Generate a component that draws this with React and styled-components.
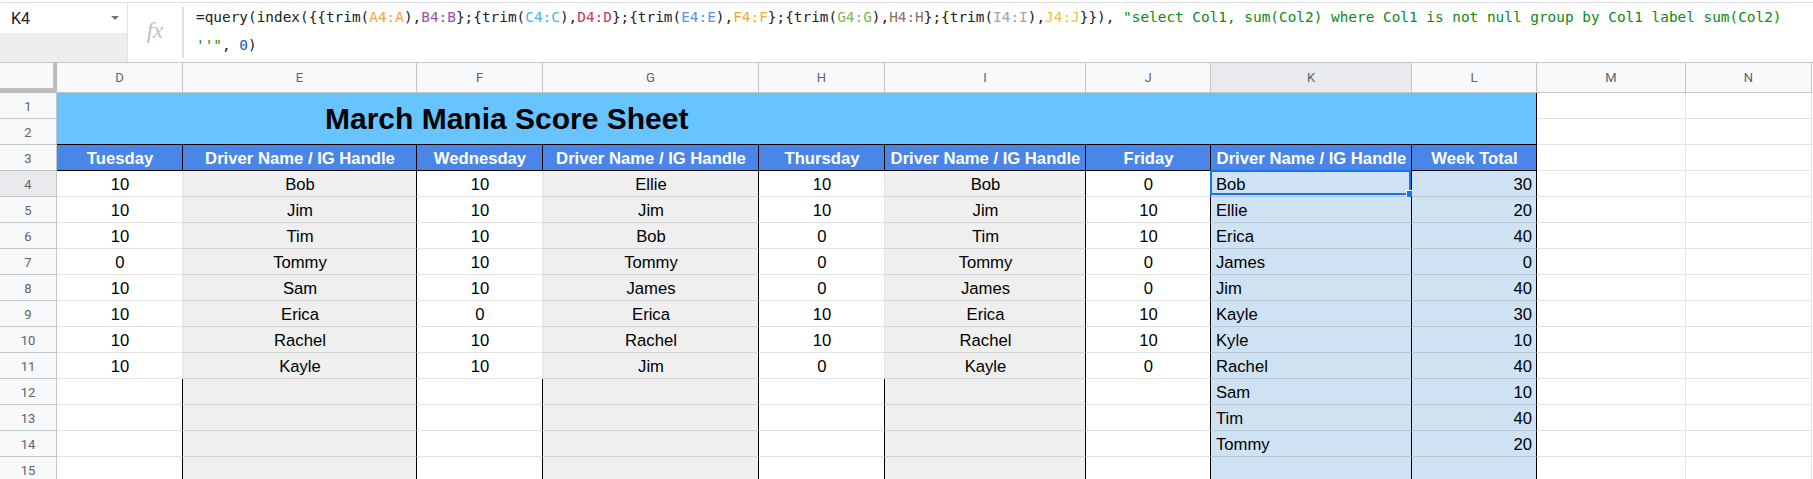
import React from 'react';
import styled, { createGlobalStyle } from 'styled-components';

const GlobalStyle = createGlobalStyle`
  html, body { margin: 0; padding: 0; background: #fff; overflow: hidden; }
  * { box-sizing: border-box; }
`;

const BLACK = '#000';
const GRID = 'rgba(0,0,0,0.11)';
const HDR_LINE = '#c4c7c5';

const Page = styled.div`
  width: 1813px;
  height: 479px;
  overflow: hidden;
  background: #fff;
`;

const FormulaBar = styled.div`
  display: flex;
  margin-top: 2px;
  height: 61px;
  border-top: 1px solid #dadce0;
  border-bottom: 1px solid ${HDR_LINE};
`;

const NameBox = styled.div`
  width: 128px;
  display: flex;
  flex-direction: column;
  border-right: 1px solid #e3e3e3;
`;

const NameInput = styled.div`
  height: 30px;
  display: flex;
  align-items: center;
  justify-content: space-between;
  padding: 0 7px 0 11px;
  font-family: Roboto, "Liberation Sans", sans-serif;
  font-size: 16px;
  color: #202124;
  background: #fff;
`;

const NameFill = styled.div`
  flex: 1;
  background: #eeeeee;
`;

const FxCell = styled.div`
  width: 54px;
  display: flex;
  align-items: center;
  justify-content: center;
  font-family: "Liberation Serif", serif;
  font-style: italic;
  font-size: 23px;
  color: #c0c0c0;
  padding-bottom: 4px;
`;

const Divider = styled.div`
  width: 2px;
  align-self: center;
  height: 51px;
  background: #dedede;
`;

const FormulaText = styled.div`
  flex: 1;
  padding-left: 12px;
  font-family: "DejaVu Sans Mono", "Liberation Mono", monospace;
  font-size: 14.4px;
  line-height: 28px;
  color: #202124;
  white-space: pre;
`;

const Tok = styled.span`
  color: ${(p) => p.$c || '#202124'};
`;

const COLS = [126, 234, 126, 216, 126, 201, 125, 201, 125, 149, 126];

const Grid = styled.div`
  display: grid;
  grid-template-columns: 57px ${COLS.map((c) => c + 'px').join(' ')};
  grid-template-rows: 30px repeat(15, 26px);
`;

const Corner = styled.div`
  background: #f8f9fa;
  border-right: 4px solid #bdbdbd;
  border-bottom: 5px solid #bdbdbd;
`;

const ColHeader = styled.div`
  background: ${(p) => (p.$active ? '#e8eaed' : '#f8f9fa')};
  border-right: 1px solid ${HDR_LINE};
  border-bottom: 1px solid ${HDR_LINE};
  display: flex;
  align-items: center;
  justify-content: center;
  font-family: Roboto, "Liberation Sans", sans-serif;
  font-size: 13px;
  color: #5f6368;
`;

const RowHeader = styled.div`
  background: ${(p) => (p.$active ? '#e8eaed' : '#f8f9fa')};
  border-right: 1px solid ${HDR_LINE};
  border-bottom: 1px solid ${HDR_LINE};
  display: flex;
  align-items: center;
  justify-content: center;
  padding-top: 1px;
  font-family: Roboto, "Liberation Sans", sans-serif;
  font-size: 13px;
  color: #5f6368;
`;

const Title = styled.div`
  grid-column: 2 / span 9;
  grid-row: 2 / span 2;
  background: #67c4fe;
  border-right: 1px solid ${BLACK};
  border-bottom: 1px solid ${BLACK};
  display: flex;
  align-items: center;
  padding-left: 268px;
  font-family: "Liberation Sans", Arial, sans-serif;
  font-weight: bold;
  font-size: 30px;
  color: #000;
  white-space: nowrap;
`;

const Cell = styled.div`
  position: relative;
  display: flex;
  align-items: center;
  justify-content: ${(p) => p.$align || 'center'};
  padding: 2px 4px 0 5px;
  background: ${(p) => p.$bg || '#fff'};
  border-right: 1px solid ${(p) => p.$rb || GRID};
  border-bottom: 1px solid ${(p) => p.$bb || GRID};
  font-family: "Liberation Sans", Arial, sans-serif;
  font-size: 16.67px;
  font-weight: ${(p) => (p.$bold ? 'bold' : 'normal')};
  color: ${(p) => p.$color || '#000'};
  white-space: nowrap;
  overflow: visible;
`;

const Selection = styled.div`
  position: absolute;
  top: -1px;
  left: -1px;
  width: calc(100% + 1px);
  height: 100%;
  border: 2px solid #1a73e8;
  pointer-events: none;
`;

const Handle = styled.div`
  position: absolute;
  right: -5px;
  bottom: -5px;
  width: 8px;
  height: 8px;
  background: #1a73e8;
  border: 1px solid #fff;
`;

const Caret = () => (
  <svg width="10" height="6" viewBox="0 0 10 6">
    <path d="M1 1 L5 5 L9 1 Z" fill="#757575" />
  </svg>
);

const LETTERS = ['D', 'E', 'F', 'G', 'H', 'I', 'J', 'K', 'L', 'M', 'N'];

const TUE = ['10', '10', '10', '0', '10', '10', '10', '10'];
const TUE_N = ['Bob', 'Jim', 'Tim', 'Tommy', 'Sam', 'Erica', 'Rachel', 'Kayle'];
const WED = ['10', '10', '10', '10', '10', '0', '10', '10'];
const WED_N = ['Ellie', 'Jim', 'Bob', 'Tommy', 'James', 'Erica', 'Rachel', 'Jim'];
const THU = ['10', '10', '0', '0', '0', '10', '10', '0'];
const THU_N = ['Bob', 'Jim', 'Tim', 'Tommy', 'James', 'Erica', 'Rachel', 'Kayle'];
const FRI = ['0', '10', '10', '0', '0', '10', '10', '0'];
const TOT_N = ['Bob', 'Ellie', 'Erica', 'James', 'Jim', 'Kayle', 'Kyle', 'Rachel', 'Sam', 'Tim', 'Tommy'];
const TOT = ['30', '20', '40', '0', '40', '30', '10', '40', '10', '40', '20'];

const HEADERS = [
  'Tuesday',
  'Driver Name / IG Handle',
  'Wednesday',
  'Driver Name / IG Handle',
  'Thursday',
  'Driver Name / IG Handle',
  'Friday',
  'Driver Name / IG Handle',
  'Week Total',
];

const GRAY = '#efefef';
const LBLUE = '#cfe2f3';

const F = [
  ['=query(index({{trim('],
  ['A4:A', '#f5a53d'],
  ['),'],
  ['B4:B', '#9c4fb0'],
  ['};{trim('],
  ['C4:C', '#46b4df'],
  ['),'],
  ['D4:D', '#c8385c'],
  ['};{trim('],
  ['E4:E', '#5b8ef0'],
  ['),'],
  ['F4:F', '#f7a92c'],
  ['};{trim('],
  ['G4:G', '#79b857'],
  ['),'],
  ['H4:H', '#8d6e63'],
  ['};{trim('],
  ['I4:I', '#a3a3a3'],
  ['),'],
  ['J4:J', '#f0c03c'],
  ['}}), '],
  ['"select Col1, sum(Col2) where Col1 is not null group by Col1 label sum(Col2)', '#0b8a12'],
];

function dataRow(r) {
  const empty = r >= 8;
  const side = empty ? BLACK : GRID;
  const k = r < TOT_N.length;
  return [
    <Cell key="d" $rb={side}>{TUE[r] || ''}</Cell>,
    <Cell key="e" $bg={GRAY} $rb={BLACK}>{TUE_N[r] || ''}</Cell>,
    <Cell key="f" $rb={side}>{WED[r] || ''}</Cell>,
    <Cell key="g" $bg={GRAY} $rb={BLACK}>{WED_N[r] || ''}</Cell>,
    <Cell key="h" $rb={side}>{THU[r] || ''}</Cell>,
    <Cell key="i" $bg={GRAY} $rb={BLACK}>{THU_N[r] || ''}</Cell>,
    <Cell key="j" $rb={BLACK}>{FRI[r] || ''}</Cell>,
    <Cell key="k" $bg={LBLUE} $rb={BLACK} $bb="rgba(0,0,0,0.12)" $align="flex-start">
      {k ? TOT_N[r] : ''}
      {r === 0 && (
        <Selection>
          <Handle />
        </Selection>
      )}
    </Cell>,
    <Cell key="l" $bg={LBLUE} $rb={BLACK} $bb="rgba(0,0,0,0.12)" $align="flex-end">
      {k ? TOT[r] : ''}
    </Cell>,
    <Cell key="m" />,
    <Cell key="n" />,
  ];
}

export default function App() {
  return (
    <Page>
      <GlobalStyle />
      <FormulaBar>
        <NameBox>
          <NameInput>
            <span>K4</span>
            <Caret />
          </NameInput>
          <NameFill />
        </NameBox>
        <FxCell>fx</FxCell>
        <Divider />
        <FormulaText>
          {F.map(([t, c], i) => (
            <Tok key={i} $c={c}>
              {t}
            </Tok>
          ))}
          {'\n'}
          <Tok $c="#0b8a12">{"''\""}</Tok>
          <Tok>{', '}</Tok>
          <Tok $c="#1155cc">0</Tok>
          <Tok>)</Tok>
        </FormulaText>
      </FormulaBar>
      <Grid>
        <Corner />
        {LETTERS.map((l) => (
          <ColHeader key={l} $active={l === 'K'}>
            {l}
          </ColHeader>
        ))}

        <RowHeader>1</RowHeader>
        <Title>March Mania Score Sheet</Title>
        <Cell />
        <Cell />

        <RowHeader>2</RowHeader>
        <Cell />
        <Cell />

        <RowHeader>3</RowHeader>
        {HEADERS.map((h, i) => (
          <Cell key={i} $bg="#4a86e8" $rb={BLACK} $bb={BLACK} $bold $color="#fff">
            {h}
          </Cell>
        ))}
        <Cell />
        <Cell />

        {Array.from({ length: 12 }, (_, r) => (
          <React.Fragment key={r}>
            <RowHeader $active={r === 0}>{r + 4}</RowHeader>
            {dataRow(r)}
          </React.Fragment>
        ))}
      </Grid>
    </Page>
  );
}
